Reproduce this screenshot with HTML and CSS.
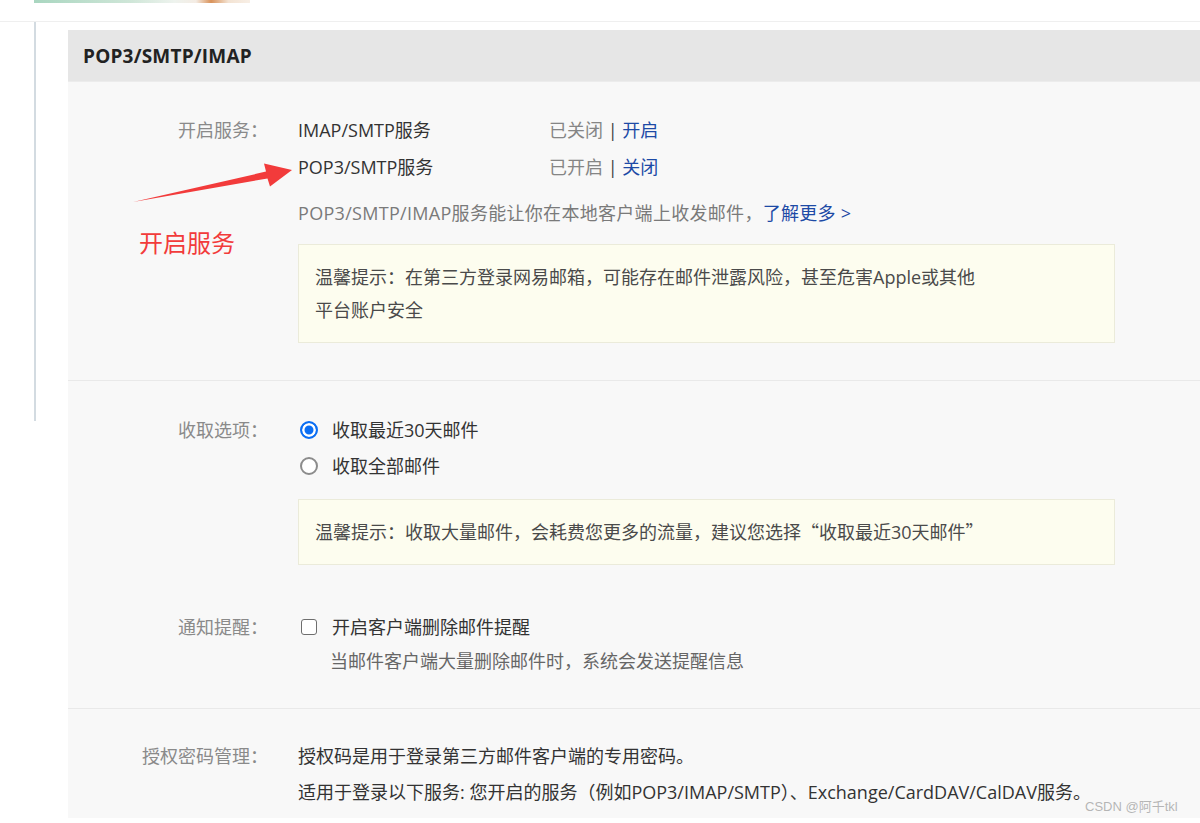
FILE: index.html
```html
<!DOCTYPE html>
<html lang="zh-CN">
<head>
<meta charset="utf-8">
<title>POP3/SMTP/IMAP</title>
<link rel="stylesheet" href="styles.css">
</head>
<body>
<div class="topstrip"></div>
<div class="frame">
  <div class="rail"></div>
  <div class="panel">
    <div class="panel-head">POP3/SMTP/IMAP</div>
    <div class="panel-body">
      <section class="section s1">
        <div class="row">
          <div class="label">开启服务：</div>
          <div class="content">
            <div class="svc"><span class="svc-name">IMAP/SMTP服务</span><span class="status">已关闭 <span class="bar">|</span> <a class="link">开启</a></span></div>
            <div class="svc"><span class="svc-name">POP3/SMTP服务</span><span class="status">已开启 <span class="bar">|</span> <a class="link">关闭</a></span></div>
            <div class="desc">POP3/SMTP/IMAP服务能让你在本地客户端上收发邮件，<a class="link">了解更多 &gt;</a></div>
            <div class="tip">温馨提示：在第三方登录网易邮箱，可能存在邮件泄露风险，甚至危害Apple或其他<br>平台账户安全</div>
          </div>
        </div>
      </section>
      <section class="section s2">
        <div class="row">
          <div class="label">收取选项：</div>
          <div class="content">
            <div class="opt"><span class="radio checked"></span>收取最近30天邮件</div>
            <div class="opt"><span class="radio"></span>收取全部邮件</div>
            <div class="tip tip2">温馨提示：收取大量邮件，会耗费您更多的流量，建议您选择<span class="cjk">“</span>收取最近30天邮件<span class="cjk">”</span></div>
          </div>
        </div>
        <div class="row notify">
          <div class="label">通知提醒：</div>
          <div class="content">
            <div class="opt"><span class="checkbox"></span>开启客户端删除邮件提醒</div>
            <div class="sub">当邮件客户端大量删除邮件时，系统会发送提醒信息</div>
          </div>
        </div>
      </section>
      <section class="section s3">
        <div class="row">
          <div class="label">授权密码管理：</div>
          <div class="content">
            <div class="line">授权码是用于登录第三方邮件客户端的专用密码。</div>
            <div class="line">适用于登录以下服务: 您开启的服务（例如POP3/IMAP/SMTP）、Exchange/CardDAV/CalDAV服务。</div>
          </div>
        </div>
      </section>
    </div>
  </div>
</div>

<svg class="annot-arrow" width="1200" height="823" viewBox="0 0 1200 823" aria-hidden="true">
  <polygon points="133,202 266,171.6 264,163.5 292,170 270,186.5 267.5,178.4" fill="#f23b3b"/>
</svg>
<div class="annot-text">开启服务</div>
<div class="watermark">CSDN @阿千tkl</div>
</body>
</html>
```

FILE: styles.css
```css
html, body {
  margin: 0;
  padding: 0;
}
body {
  width: 1200px;
  height: 823px;
  overflow: hidden;
  background: #fff;
  font-family: "Open Sans", "Noto Sans CJK SC", sans-serif;
  font-size: 18px;
  color: #333;
  position: relative;
}
.cjk {
  font-family: "Noto Sans CJK SC", sans-serif;
}
.topstrip {
  margin-left: 34px;
  width: 216px;
  height: 3px;
  background: linear-gradient(90deg, #a9d6c0 0%, #cfe6d8 45%, #eef3ee 65%, #f4ece4 75%, #d9925a 82%, #f3e3d3 90%, #f8efe6 100%);
}
.frame {
  margin-top: 18px;
  border-top: 1px solid #efefef;
  display: flex;
  align-items: flex-start;
}
.rail {
  width: 2px;
  height: 399px;
  margin-left: 34px;
  background: #d3dbe1;
  flex: none;
}
.panel {
  flex: 1;
  margin-left: 32px;
  margin-top: 8px;
}
.panel-head {
  height: 51px;
  background: #e6e6e6;
  border-bottom: 1px solid #ececec;
  display: flex;
  align-items: center;
  padding-left: 15px;
  font-weight: 700;
  font-size: 19px;
  letter-spacing: 0.2px;
  color: #222;
}
.panel-body {
  background: #f8f8f8;
}
.section {
  border-bottom: 1px solid #e9e9e9;
}
.s1 { padding: 30px 0 37px; }
.s2 { padding: 31px 0 31px; }
.s3 { padding: 29px 0 8px; border-bottom: none; }
.row {
  display: grid;
  grid-template-columns: 200px 1fr;
  column-gap: 30px;
}
.label {
  text-align: right;
  color: #8a8a8a;
  line-height: 37px;
}
.s2 .label, .s3 .label { line-height: 36px; }
.content {
  color: #333;
}
.svc {
  line-height: 37px;
  display: flex;
}
.svc-name {
  width: 251px;
  color: #333;
}
.status {
  color: #858585;
}
.bar {
  color: #444;
}
.link {
  color: #1d4aa6;
  text-decoration: none;
}
.desc {
  margin-top: 9px;
  line-height: 36px;
  color: #7a7a7a;
  letter-spacing: 0.3px;
}
.tip {
  margin-top: 13px;
  width: 783px;
  padding: 16px 16px 15px;
  background: #fdfdef;
  border: 1px solid #ebebda;
  line-height: 33px;
  color: #4a4a4a;
}
.tip2 {
  margin-top: 15px;
  padding: 15px 16px;
}
.opt {
  line-height: 36px;
  display: flex;
  align-items: center;
  color: #333;
}
.radio {
  width: 18px;
  height: 18px;
  box-sizing: border-box;
  border-radius: 50%;
  border: 2px solid #8c8c8c;
  background: #fff;
  margin-left: 2px;
  margin-right: 14px;
  flex: none;
}
.radio.checked {
  border-color: #0b6ef3;
  background: #0b6ef3;
  box-shadow: inset 0 0 0 2.5px #fff;
}
.checkbox {
  width: 16px;
  height: 16px;
  box-sizing: border-box;
  border: 1.5px solid #6e6e6e;
  border-radius: 3px;
  background: #fff;
  margin-left: 3px;
  margin-right: 15px;
  flex: none;
}
.notify {
  margin-top: 44px;
}
.sub {
  margin-left: 32px;
  line-height: 32px;
  color: #666;
}
.line {
  line-height: 36px;
  color: #333;
}
.annot-arrow {
  position: absolute;
  left: 0;
  top: 0;
  pointer-events: none;
}
.annot-text {
  position: absolute;
  left: 139px;
  top: 225px;
  font-size: 24px;
  line-height: 34px;
  color: #f23b3b;
  font-family: "Noto Sans CJK SC", sans-serif;
}
.watermark {
  position: absolute;
  left: 1085px;
  top: 797px;
  font-size: 13px;
  line-height: 20px;
  color: #b5b5b5;
  font-family: "Liberation Sans", "Noto Sans CJK SC", sans-serif;
  text-shadow: 0 0 1px #fff;
}
```
